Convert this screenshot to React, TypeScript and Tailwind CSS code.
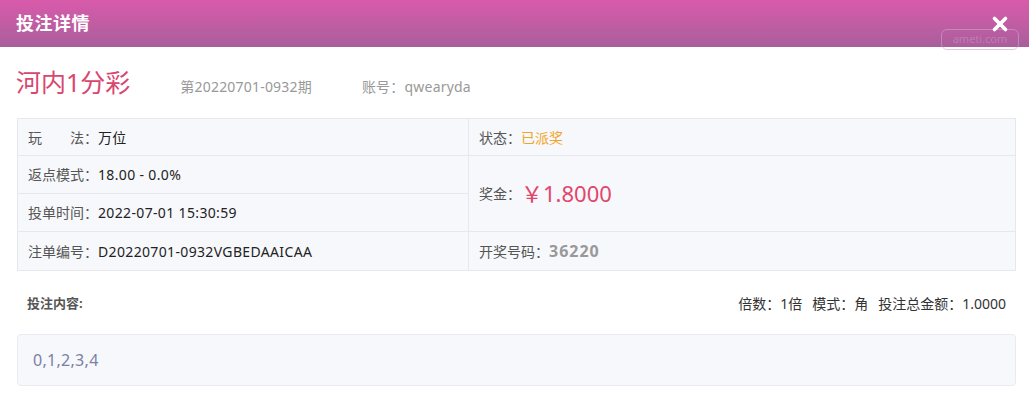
import React from 'react';
import { X } from 'lucide-react';

const font = { fontFamily: '"Noto Sans", "Noto Sans CJK SC", sans-serif' };

const Label = ({ children }: { children: React.ReactNode }) => (
  <span className="text-[14px] text-[#555]">{children}</span>
);

const Value = ({ children }: { children: React.ReactNode }) => (
  <span className="text-[14px] text-[#222] tracking-[0.35px]">{children}</span>
);

const App = () => {
  return (
    <div className="w-[1029px] h-[404px] bg-white overflow-hidden" style={font}>
      {/* header */}
      <div className="relative h-[47px] flex items-center justify-between px-4 bg-gradient-to-b from-[#d95aab] to-[#a95e9c]">
        <h2 className="text-[18px] font-bold text-white tracking-[0.5px]">投注详情</h2>
        <div className="absolute right-[10px] top-[29px] w-[78px] h-[21px] rounded-[6px] border border-[#c9a6c6]/60 text-[11px] text-white/20 flex items-center justify-center">
          ameti.com
        </div>
        <X className="relative w-[22px] h-[22px] text-white mr-[2px]" strokeWidth={4} />
      </div>

      {/* title */}
      <div className="flex items-baseline px-4 pt-[13px] h-[71px]">
        <span className="text-[25px] text-[#d9466f] leading-[44px]">河内1分彩</span>
        <span className="ml-[50px] text-[14px] text-[#999] tracking-[0.2px]">第20220701-0932期</span>
        <span className="ml-[50px] text-[14px] text-[#999] tracking-[0.2px]">账号：qwearyda</span>
      </div>

      {/* table */}
      <div className="mx-[17px] w-[999px] grid grid-cols-[451px_1fr] border border-[#e6e8ee] bg-[#f7f8fb]">
        <div className="border-r border-[#e6e8ee]">
          <div className="h-[37px] flex items-center px-[10px] border-b border-[#e6e8ee]">
            <Label>
              玩<span className="inline-block w-[28px]" />法：
            </Label>
            <Value>万位</Value>
          </div>
          <div className="h-[38px] flex items-center px-[10px] border-b border-[#e6e8ee]">
            <Label>返点模式：</Label>
            <Value>18.00 - 0.0%</Value>
          </div>
          <div className="h-[38px] flex items-center px-[10px] border-b border-[#e6e8ee]">
            <Label>投单时间：</Label>
            <Value>2022-07-01 15:30:59</Value>
          </div>
          <div className="h-[38px] flex items-center px-[10px]">
            <Label>注单编号：</Label>
            <Value>D20220701-0932VGBEDAAICAA</Value>
          </div>
        </div>
        <div>
          <div className="h-[37px] flex items-center px-[10px] border-b border-[#e6e8ee]">
            <Label>状态：</Label>
            <span className="text-[14px] text-[#f0a526]">已派奖</span>
          </div>
          <div className="h-[76px] flex items-center px-[10px] border-b border-[#e6e8ee]">
            <Label>奖金：</Label>
            <span className="text-[22px] text-[#e0476b]">￥1.8000</span>
          </div>
          <div className="h-[38px] flex items-center px-[10px]">
            <Label>开奖号码：</Label>
            <span className="text-[16px] font-bold text-[#999] tracking-[1px]">36220</span>
          </div>
        </div>
      </div>

      {/* bet content */}
      <div className="flex items-center justify-between pl-[27px] pr-[23px] pt-[22px] pb-[20px]">
        <span className="text-[13px] font-bold text-[#555]">投注内容:</span>
        <span className="text-[14px] text-[#333] flex gap-[10px]">
          <span>倍数：1倍</span>
          <span>模式：角</span>
          <span>投注总金额：1.0000</span>
        </span>
      </div>
      <div className="mx-[17px] w-[999px] h-[52px] rounded-[4px] border border-[#e9ebf0] bg-[#f7f8fb] flex items-center px-[15px]">
        <span className="text-[16px] text-[#7a80a6] tracking-[0.3px]">0,1,2,3,4</span>
      </div>
    </div>
  );
};

export default App;
